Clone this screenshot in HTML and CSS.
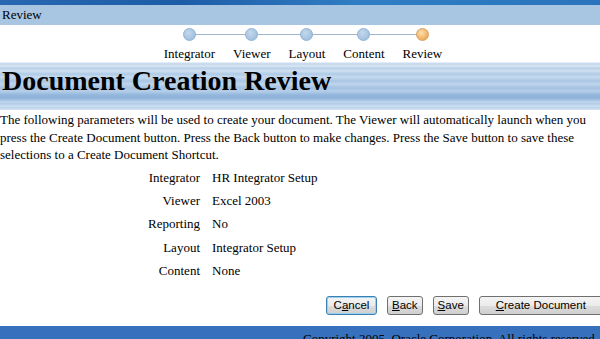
FILE: index.html
```html
<!DOCTYPE html>
<html>
<head>
<meta charset="utf-8">
<link rel="stylesheet" href="styles.css">
</head>
<body>
<div class="topband"></div>
<div class="titlebar">Review</div>
<div class="train">
  <div class="step"><span class="dot"></span><span class="lbl">Integrator</span></div>
  <div class="step"><span class="dot"></span><span class="lbl">Viewer</span></div>
  <div class="step"><span class="dot"></span><span class="lbl">Layout</span></div>
  <div class="step"><span class="dot"></span><span class="lbl">Content</span></div>
  <div class="step last"><span class="dot cur"></span><span class="lbl">Review</span></div>
</div>
<div class="header"><h1>Document Creation Review</h1></div>
<p class="intro">The following parameters will be used to create your document. The Viewer will automatically launch when you press the Create Document button. Press the Back button to make changes. Press the Save button to save these selections to a Create Document Shortcut.</p>
<div class="params">
  <div class="k">Integrator</div><div class="v">HR Integrator Setup</div>
  <div class="k">Viewer</div><div class="v">Excel 2003</div>
  <div class="k">Reporting</div><div class="v">No</div>
  <div class="k">Layout</div><div class="v">Integrator Setup</div>
  <div class="k">Content</div><div class="v">None</div>
</div>
<div class="buttons">
  <button class="btn focus">C<u>a</u>ncel</button>
  <button class="btn"><u>B</u>ack</button>
  <button class="btn"><u>S</u>ave</button>
  <button class="btn wide"><u>C</u>reate Document</button>
</div>
<div class="footer">Copyright 2005, Oracle Corporation. All rights reserved</div>
</body>
</html>
```
FILE: styles.css
```css
html, body {
  margin: 0;
  padding: 0;
  overflow: hidden;
  background: #fff;
  font-family: "Liberation Serif", "Times New Roman", serif;
  font-size: 13px;
  color: #000;
  width: 600px;
  height: 339px;
}
.topband {
  height: 5px;
  background: linear-gradient(to right, #2a67b3 0%, #1f5ca8 30%, #2f7ec4 60%, #2a74bd 100%);
}
.titlebar {
  height: 20px;
  line-height: 20px;
  background: #a8c5e2;
  padding-left: 2px;
  font-size: 13px;
}
.train {
  display: flex;
  justify-content: center;
  gap: 18px;
  padding-left: 6px;
  height: 37px;
  box-sizing: border-box;
  padding-top: 3px;
}
.step {
  display: flex;
  flex-direction: column;
  align-items: center;
  position: relative;
}
.step::after {
  content: "";
  position: absolute;
  top: 6px;
  left: 50%;
  width: calc(100% + 18px);
  height: 1px;
  background: #9fb6cc;
  z-index: 0;
}
.step.last::after { display: none; }
.dot {
  width: 11px;
  height: 11px;
  border-radius: 50%;
  background: radial-gradient(circle at 40% 35%, #c3d8ec, #a4c2e0 70%);
  border: 1px solid #8fb1d3;
  position: relative;
  z-index: 1;
}
.dot.cur {
  background: radial-gradient(circle at 40% 35%, #fbe0b0, #f1ad5c 70%, #e49a40);
  border-color: #d9a060;
}
.lbl {
  margin-top: 5px;
  line-height: 15px;
}
.header {
  height: 48px;
  background: linear-gradient(to bottom,
    #ffffff 0px, #c9dcef 1px, #c9dcef 3px, #dde9f5 4px, #b7cfe8 6px,
    #cfe0f1 9px, #b0cbe6 12px, #c7dbef 15px, #a9c6e4 19px, #bfd5ec 22px,
    #a3c1e1 26px, #b6cfe9 29px, #93b6dc 33px, #8db1d9 36px, #a6c3e3 38px,
    #c0d6ed 40px, #b3cde8 42px, #cde0f2 44px, #bed4ec 46px, #d8e6f4 48px);
}
.header h1 {
  margin: 0;
  padding: 4px 0 0 2px;
  font-size: 28px;
  line-height: 30px;
  font-weight: bold;
}
.intro {
  margin: 1px 0 0 0;
  line-height: 17.5px;
  font-size: 13px;
}
.params {
  display: grid;
  grid-template-columns: 200px auto;
  column-gap: 12px;
  grid-auto-rows: 23.2px;
  align-items: center;
  margin-top: 3px;
}
.k { text-align: right; }
.buttons {
  display: flex;
  gap: 10px;
  padding-left: 326px;
  margin-top: 14px;
  height: 19px;
}
.btn {
  font-family: "Liberation Sans", Arial, sans-serif;
  font-size: 11.5px;
  height: 19px;
  padding: 0 4px;
  border: 1px solid #707070;
  border-radius: 3px;
  background: linear-gradient(to bottom, #f4f4f4 0%, #ebebeb 50%, #dddddd 51%, #cfcfcf 100%);
  color: #000;
  line-height: 15px;
  flex: none;
}
.btn.focus {
  border-color: #3c7fb1;
  box-shadow: inset 0 0 0 1px #9cd0f0;
  width: 51px;
}
.btn.wide { width: 126px; padding-right: 6px; }
.footer {
  position: absolute;
  left: 0;
  right: 0;
  top: 326px;
  height: 13px;
  overflow: hidden;
  background: #3771bd;
  padding-left: 303px;
  padding-top: 5px;
  box-sizing: border-box;
  white-space: nowrap;
  font-size: 13px;
  line-height: 15px;
}
```
